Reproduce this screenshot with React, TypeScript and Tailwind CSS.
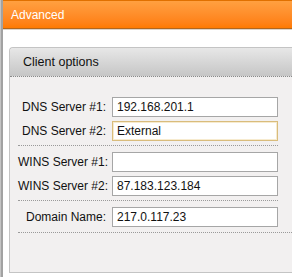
const groups = [
  {
    rows: [
      { label: "DNS Server #1:", value: "192.168.201.1" },
      { label: "DNS Server #2:", value: "External", focused: true },
    ],
    wide: false,
  },
  {
    rows: [
      { label: "WINS Server #1:", value: "" },
      { label: "WINS Server #2:", value: "87.183.123.184" },
    ],
    wide: false,
  },
  {
    rows: [{ label: "Domain Name:", value: "217.0.117.23" }],
    wide: true,
  },
];

function Field({ label, value, focused }: { label: string; value: string; focused?: boolean }) {
  return (
    <div className="flex items-center h-[20px]">
      <div className="w-[89px] pr-[1px] text-right text-[12px] text-[#111] whitespace-nowrap">{label}</div>
      <div
        className={`ml-[5px] w-[166px] h-[20px] flex items-center pl-[4px] bg-white text-[12px] text-[#111] border ${
          focused ? "border-[#d9bc7c] shadow-[inset_0_0_0_1px_#f7ebcf]" : "border-[#a6a6a6]"
        }`}
      >
        {value}
      </div>
    </div>
  );
}

export default function App() {
  return (
    <div className="w-[292px] h-[277px] overflow-hidden flex bg-white font-['Liberation_Sans',Arial,sans-serif]">
      <div className="w-[3px] shrink-0 bg-[#a2a2a2] border-l border-[#c4c4c4]" />
      <div className="flex-1 flex flex-col min-w-0">
        <div className="h-[28px] border-t border-[#e07000] bg-gradient-to-b from-[#ffa040] to-[#ff7a00] flex items-center pl-[8px] text-white text-[12px]">
          Advanced
        </div>
        <div className="h-[1px] bg-[#b3661c]" />
        <div className="h-[1px] bg-[#ddd3c9]" />
        <div className="pt-[17px] pl-[6px]">
          <div className="border-l border-t border-b border-[#c4c4c4] rounded-tl-[4px] bg-[#f2f0f0] h-[226px]">
            <div className="h-[29px] rounded-tl-[4px] bg-gradient-to-b from-[#e7e7e7] to-[#c6c6c6] border-b border-dotted border-[#8a8a8a] flex items-center pl-[13px] text-[12.5px] text-[#111]">
              Client options
            </div>
            <div className="pl-[8px] pt-[20px]">
              {groups.map((g, i) => (
                <div
                  key={i}
                  className={`flex flex-col gap-[4px] border-b border-dotted border-[#9a9a9a] ${
                    g.wide ? "pb-[5px] pt-[6px]" : i === 0 ? "w-[260px] pb-[4px]" : "w-[260px] pb-[4px] pt-[6px]"
                  }`}
                >
                  {g.rows.map((r) => (
                    <Field key={r.label} {...r} />
                  ))}
                </div>
              ))}
            </div>
          </div>
        </div>
      </div>
    </div>
  );
}
